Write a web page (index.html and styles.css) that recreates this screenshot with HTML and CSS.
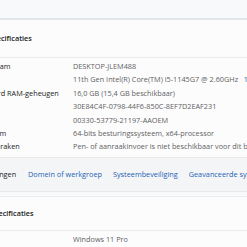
FILE: index.html
```html
<!DOCTYPE html>
<html lang="nl">
<head>
<meta charset="utf-8">
<link rel="stylesheet" href="styles.css">
</head>
<body>
<div class="window">
  <div class="prev"></div>
  <section class="card">
    <div class="card-head">Apparaatspecificaties</div>
    <div class="rows">
      <div class="row"><span class="label">Apparaatnaam</span><span class="value">DESKTOP-JLEM488</span></div>
      <div class="row"><span class="label">Processor</span><span class="value">11th Gen Intel(R) Core(TM) i5-1145G7 @ 2.60GHz&nbsp;&nbsp;&nbsp;1.50 GHz</span></div>
      <div class="row"><span class="label">Geïnstalleerd RAM-geheugen</span><span class="value">16,0 GB (15,4 GB beschikbaar)</span></div>
      <div class="row"><span class="label">Apparaat-id</span><span class="value">30E84C4F-0798-44F6-850C-8EF7D2EAF231</span></div>
      <div class="row"><span class="label">Product-id</span><span class="value">00330-53779-21197-AAOEM</span></div>
      <div class="row"><span class="label">Type systeem</span><span class="value">64-bits besturingssysteem, x64-processor</span></div>
      <div class="row"><span class="label">Pen- en aanraken</span><span class="value">Pen- of aanraakinvoer is niet beschikbaar voor dit beeldscherm</span></div>
    </div>
    <div class="related">
      <span class="label">Verwante koppelingen</span>
      <a class="link">Domein of werkgroep</a>
      <a class="link">Systeembeveiliging</a>
      <a class="link">Geavanceerde systeeminstellingen</a>
    </div>
  </section>
  <section class="card card2">
    <div class="card-head">Windows-specificaties</div>
    <div class="rows">
      <div class="row"><span class="label">Editie</span><span class="value">Windows 11 Pro</span></div>
    </div>
  </section>
</div>
</body>
</html>
```
FILE: styles.css
```css
html, body {
  margin: 0;
  padding: 0;
  background: #f9fafb;
  overflow: hidden;
}
body {
  width: 247px;
  height: 247px;
  font-family: "Open Sans", "Noto Sans", sans-serif;
  font-size: 7.3px;
  color: #1b1b1b;
}
.window {
  margin-left: -40px;
  width: 340px;
}
.prev {
  height: 18px;
  background: #f8f9fb;
  border-bottom: 2px solid #e2e6ea;
}
.card {
  background: #fcfcfd;
}
.card-head {
  height: 37px;
  line-height: 37px;
  text-indent: -4px;
  font-weight: 600;
  border-bottom: 1px solid #ebebeb;
  white-space: nowrap;
}
.rows {
  padding-top: 2px;
  padding-bottom: 3px;
}
.row {
  display: flex;
  height: 13.4px;
  line-height: 13.4px;
  white-space: nowrap;
}
.label {
  width: 113px;
  flex: none;
}
.value {
  color: #5f5f5f;
}
.related {
  display: flex;
  height: 33px;
  line-height: 33px;
  background: #f4f5f7;
  border-top: 1px solid #e8e9eb;
  border-bottom: 1px solid #e8e9eb;
  white-space: nowrap;
}
.related .label {
  width: 88px;
  margin-left: -20px;
}
.link {
  color: #1d62b5;
  margin-right: 11px;
}
.card2 {
  margin-top: 4px;
  border-top: 1px solid #ebedf0;
}
.card2 .card-head {
  height: 33px;
  line-height: 33px;
}
```
